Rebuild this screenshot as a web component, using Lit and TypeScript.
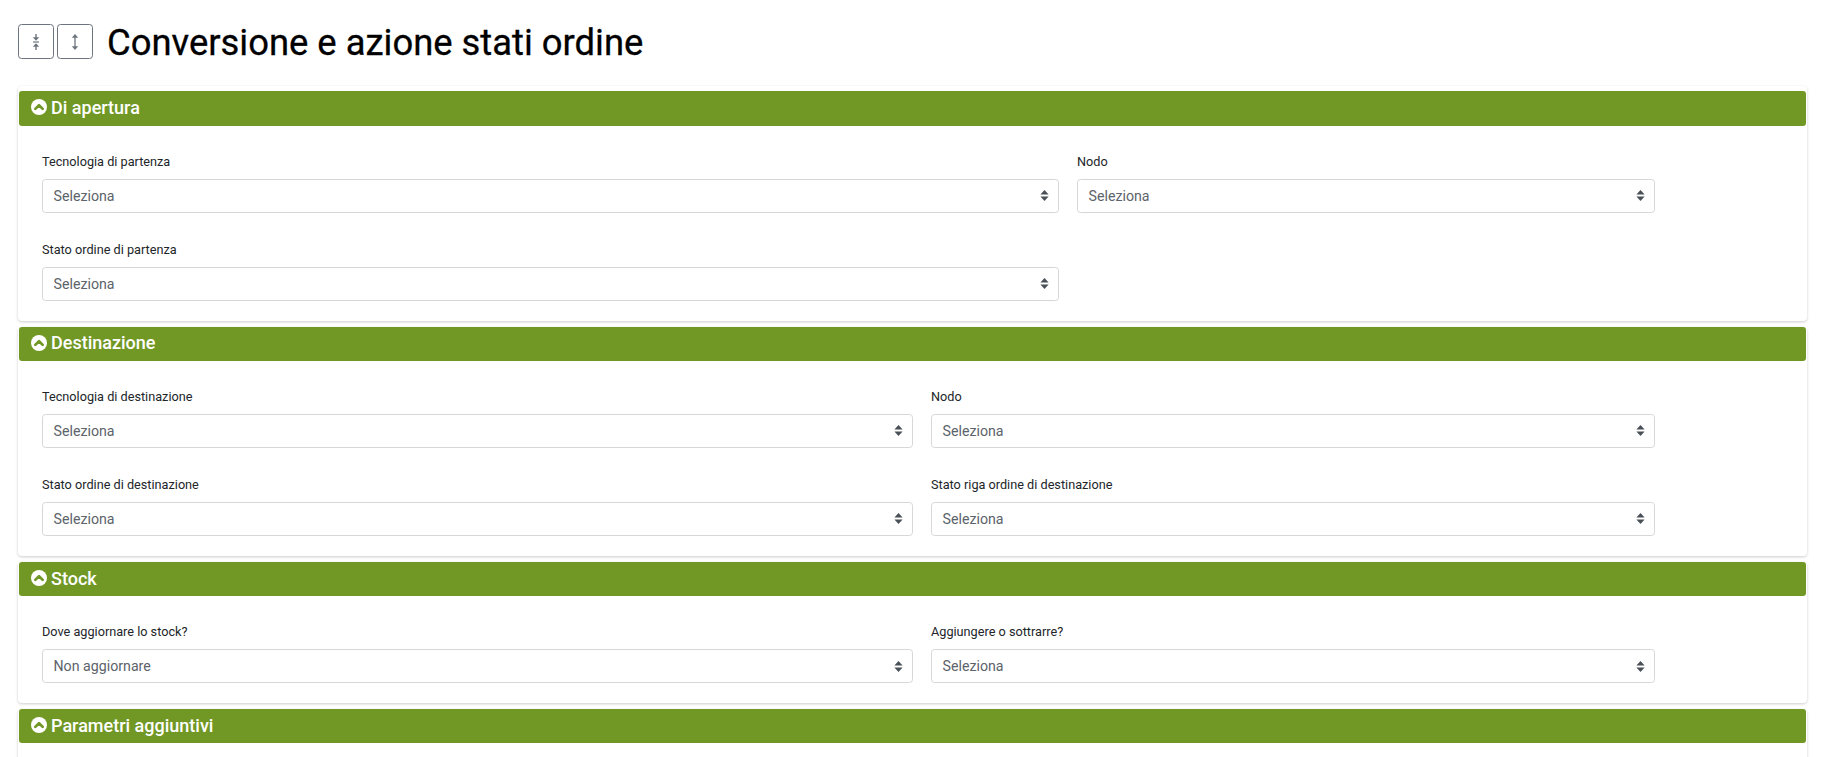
import { LitElement, html, css, svg } from "lit";
import { customElement } from "lit/decorators.js";

interface Field { label: string; value?: string; }
interface Section { title: string; cols: string; rows: Field[]; }

const SECTIONS: Section[] = [
  { title: "Di apertura", cols: "c-wide", rows: [
    { label: "Tecnologia di partenza" }, { label: "Nodo" }, { label: "Stato ordine di partenza" },
  ]},
  { title: "Destinazione", cols: "c-even", rows: [
    { label: "Tecnologia di destinazione" }, { label: "Nodo" },
    { label: "Stato ordine di destinazione" }, { label: "Stato riga ordine di destinazione" },
  ]},
  { title: "Stock", cols: "c-even", rows: [
    { label: "Dove aggiornare lo stock?", value: "Non aggiornare" }, { label: "Aggiungere o sottrarre?" },
  ]},
  { title: "Parametri aggiuntivi", cols: "c-even", rows: [] },
];

const chevronCircle = svg`<svg class="chev" viewBox="0 0 16 16" aria-hidden="true"><circle cx="8" cy="8" r="8" fill="#fff"/><path d="M4.3 9.9 8 6.2l3.7 3.7" fill="none" stroke="#719825" stroke-width="2.7" stroke-linecap="round" stroke-linejoin="round"/></svg>`;
const sortIcon = svg`<svg class="sort" viewBox="0 0 9 11" aria-hidden="true"><path d="M4.5 0 8.6 4.5H.4zM4.5 11 .4 6.5h8.2z" fill="#495057"/></svg>`;
const collapseIcon = svg`<svg class="ico" viewBox="0 0 8 16" aria-hidden="true"><path d="M4 0v4M4 16v-4" stroke="#6c757d" stroke-width="1.4" fill="none"/><path d="M.8 3.2h6.4L4 6.8zM.8 12.8h6.4L4 9.2z" fill="#6c757d"/><path d="M1 8h6" stroke="#6c757d" stroke-width="1.2"/></svg>`;
const expandIcon = svg`<svg class="ico" viewBox="0 0 8 16" aria-hidden="true"><path d="M4 3v10" stroke="#6c757d" stroke-width="1.3" fill="none"/><path d="M4 0 7.2 3.8H.8zM4 16 .8 12.2h6.4z" fill="#6c757d"/></svg>`;

@customElement("app-root")
export class AppRoot extends LitElement {
  static styles = css`
    :host {
      display: block;
      height: 757px;
      overflow: hidden;
      background: #fff;
      font-family: Roboto, "Liberation Sans", sans-serif;
      box-sizing: border-box;
      padding: 24px 15px 0 18px;
    }
    .head { display: flex; align-items: center; height: 35px; margin-bottom: 27.3px; }
    .tbtn {
      width: 36px; height: 35px; box-sizing: border-box; border: 1px solid #6c757d;
      border-radius: 3.5px; background: #fff; display: flex; align-items: center; justify-content: center;
      margin-right: 3px; padding: 0;
    }
    .ico { width: 8px; height: 16px; display: block; }
    h1 { margin: 2px 0 0 11px; font-size: 36.4px; font-weight: 400; -webkit-text-stroke: 0.3px #000; line-height: 35px; color: #000; white-space: nowrap; }
    .card {
      background: #fff; border-radius: 4px; box-shadow: 0 1px 3px rgba(0,0,0,.2);
      padding: 5px 1px 0;
    }
    .card + .card { padding-top: 0; margin-top: 6px; }
    .bar {
      height: 34.3px; box-sizing: border-box; background: #719825; border-radius: 3px;
      display: flex; align-items: center; padding: 0 12px 2px; color: #fff; font-size: 18px; font-weight: 500;
    }
    .chev { width: 16px; height: 16px; margin-right: 4px; flex: none; }
    .body { padding: 27px 23px 20px; display: grid; row-gap: 28px; column-gap: 18px; }
    .c-wide { grid-template-columns: 1017px 578px; }
    .c-even { grid-template-columns: 871px 724px; }
    .stub { height: 100px; }
    .field { display: flex; flex-direction: column; }
    label { font-size: 12.7px; font-weight: 400; line-height: 18px; color: #212529; margin-bottom: 8px; }
    .sel {
      height: 34px; box-sizing: border-box; border: 1px solid #d5d7d9; border-radius: 3.5px;
      display: flex; align-items: center; justify-content: space-between; padding: 0 9px 0 10.5px;
      font-size: 14.2px; color: #5c636a; background: #fff;
    }
    .sort { width: 9px; height: 11px; flex: none; }
  `;

  private field(f: Field) {
    return html`<div class="field"><label>${f.label}</label>
      <div class="sel" role="combobox"><span>${f.value ?? "Seleziona"}</span>${sortIcon}</div></div>`;
  }

  render() {
    return html`
      <div class="head">
        <button class="tbtn">${collapseIcon}</button>
        <button class="tbtn">${expandIcon}</button>
        <h1>Conversione e azione stati ordine</h1>
      </div>
      ${SECTIONS.map(s => html`<section class="card">
        <div class="bar">${chevronCircle}<span>${s.title}</span></div>
        ${s.rows.length
          ? html`<div class="body ${s.cols}">${s.rows.map(f => this.field(f))}</div>`
          : html`<div class="stub"></div>`}
      </section>`)}
    `;
  }
}
